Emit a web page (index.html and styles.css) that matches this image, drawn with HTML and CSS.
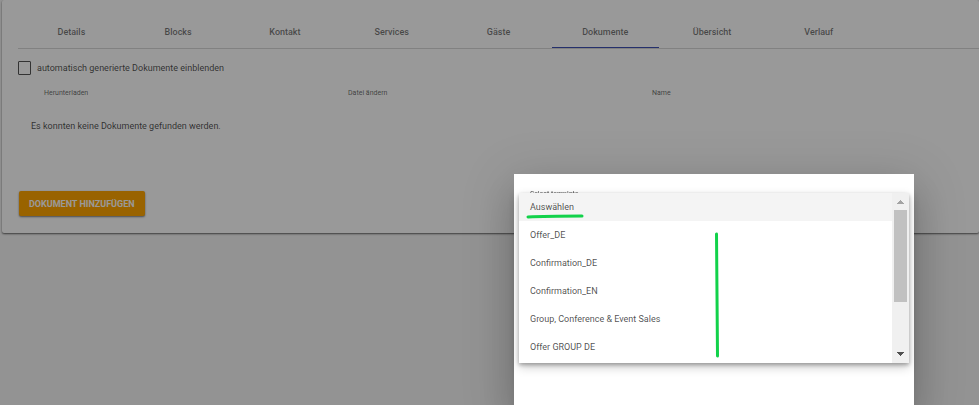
FILE: index.html
```html
<!DOCTYPE html>
<html lang="de">
<head>
    <meta charset="UTF-8">
    <meta name="viewport" content="width=device-width, initial-scale=1.0">
    <title>Dokumente</title>
    <link rel="stylesheet" href="styles.css">
</head>
<body>
    <main class="card">
        <nav class="tabs">
            <a href="#details" class="tab">Details</a>
            <a href="#blocks" class="tab">Blocks</a>
            <a href="#kontakt" class="tab">Kontakt</a>
            <a href="#services" class="tab">Services</a>
            <a href="#gaeste" class="tab">Gäste</a>
            <a href="#dokumente" class="tab active">Dokumente</a>
            <a href="#uebersicht" class="tab">Übersicht</a>
            <a href="#verlauf" class="tab">Verlauf</a>
        </nav>
        <div class="filter">
            <input type="checkbox" id="showGenerated">
            <label for="showGenerated">automatisch generierte Dokumente einblenden</label>
        </div>
        <table class="documents">
            <thead>
                <tr>
                    <th>Herunterladen</th>
                    <th>Datei ändern</th>
                    <th>Name</th>
                </tr>
            </thead>
            <tbody>
                <tr>
                    <td colspan="3">Es konnten keine Dokumente gefunden werden.</td>
                </tr>
            </tbody>
        </table>
        <button class="add-button" type="button">DOKUMENT HINZUFÜGEN</button>
    </main>

    <div class="backdrop"></div>

    <div class="dialog" role="dialog" aria-modal="true">
        <label class="field-label" for="template">Select template</label>
        <select id="template" class="template-select">
            <option>Auswählen</option>
        </select>

        <div class="dropdown">
            <ul class="options" role="listbox">
                <li><button type="button" class="option selected" role="option" aria-selected="true">Auswählen</button></li>
                <li><button type="button" class="option" role="option">Offer_DE</button></li>
                <li><button type="button" class="option" role="option">Confirmation_DE</button></li>
                <li><button type="button" class="option" role="option">Confirmation_EN</button></li>
                <li><button type="button" class="option" role="option">Group, Conference &amp; Event Sales</button></li>
                <li><button type="button" class="option" role="option">Offer GROUP DE</button></li>
            </ul>
            <div class="scrollbar">
                <svg class="arrow up" viewBox="0 0 7 4"><path d="M3 0h1v1h1v1h1v1h1v1H0V3h1V2h1V1h1z"/></svg>
                <div class="thumb"></div>
                <svg class="arrow down" viewBox="0 0 7 4"><path d="M0 0h7v1H6v1H5v1H4v1H3V3H2V2H1V1H0z"/></svg>
            </div>
            <svg class="marks" viewBox="0 0 390 170">
                <path d="M9 24Q26 23 63 23" />
                <path d="M197.500 41L198.500 163" />
            </svg>
        </div>
    </div>
</body>
</html>
```
FILE: styles.css
```css
* {
    margin: 0;
    padding: 0;
    box-sizing: border-box;
}

body {
    font-family: Roboto, Arial, sans-serif;
    font-size: 9px;
    line-height: 12px;
    color: rgba(0, 0, 0, 0.7);
    background-color: #f5f5f5;
    min-height: 100vh;
    overflow: hidden;
}

.card {
    margin-left: 2px;
    padding: 16px 0 17px 16px;
    background-color: white;
    border-radius: 2px;
    box-shadow: 0 1px 2px rgba(0, 0, 0, 0.6);
}

.tabs {
    display: grid;
    grid-template-columns: repeat(9, 1fr);
    border-bottom: 1px solid #d8d8d8;
}

.tab {
    display: flex;
    justify-content: center;
    align-items: center;
    height: 32px;
    border-bottom: 1px solid transparent;
    font-weight: 500;
    color: rgba(0, 0, 0, 0.54);
    text-decoration: none;
}

.tab.active {
    border-bottom-color: #3f51b5;
}

.filter {
    display: flex;
    align-items: center;
    gap: 6px;
    padding: 12px 0;
}

.filter input {
    appearance: none;
    width: 13px;
    height: 14px;
    border: 1px solid #555;
    border-radius: 1px;
}

.documents {
    width: 100%;
    table-layout: fixed;
    border-collapse: collapse;
}

.documents th {
    width: 304px;
    padding-left: 26px;
    font-size: 7px;
    font-weight: 400;
    text-align: left;
    color: rgba(0, 0, 0, 0.6);
}

.documents th:last-child {
    width: auto;
}

.documents td {
    padding: 21px 13px;
}

.add-button {
    display: block;
    margin: 38px 0 0 1px;
    padding: 0 10px;
    height: 25px;
    font: 700 9px Roboto, Arial, sans-serif;
    color: white;
    background-color: #ffa500;
    border: none;
    border-radius: 2px;
    box-shadow: 0 1px 2px rgba(0, 0, 0, 0.5);
    cursor: pointer;
}

.backdrop {
    position: fixed;
    inset: 0;
    background-color: rgba(0, 0, 0, 0.4);
}

.dialog {
    position: absolute;
    top: 174px;
    bottom: 0;
    left: 514px;
    width: 400px;
    padding: 14px 16px;
    background-color: white;
    box-shadow: 0 11px 15px -7px rgba(0, 0, 0, 0.2), 0 24px 38px 3px rgba(0, 0, 0, 0.14), 0 9px 46px 8px rgba(0, 0, 0, 0.12);
}

.field-label {
    display: block;
    font-size: 7px;
}

.template-select {
    width: 100%;
    border: none;
    font: 9px Roboto, Arial, sans-serif;
}

.dropdown {
    position: absolute;
    top: 19px;
    left: 5px;
    right: 5px;
    display: flex;
    background-color: white;
    box-shadow: 0 2px 4px rgba(0, 0, 0, 0.3), 0 4px 10px rgba(0, 0, 0, 0.2);
}

.options {
    flex: 1;
    padding-bottom: 2px;
    list-style: none;
}

.option {
    display: block;
    width: 100%;
    height: 28px;
    padding: 0 11px;
    font: 9px Roboto, Arial, sans-serif;
    text-align: left;
    color: rgba(0, 0, 0, 0.7);
    background-color: white;
    border: none;
    cursor: pointer;
}

.option.selected {
    background-color: #f4f4f4;
}

.scrollbar {
    display: flex;
    flex-direction: column;
    align-items: center;
    width: 17px;
    padding: 7px 2px;
    background-color: #f0f0f0;
}

.arrow {
    width: 7px;
    height: 4px;
    fill: #a3a3a3;
}

.arrow.down {
    margin-top: auto;
    fill: #505050;
}

.thumb {
    width: 100%;
    height: 92px;
    margin-top: 6px;
    background-color: #c1c1c1;
}

.marks {
    position: absolute;
    top: 0;
    left: 0;
    width: 100%;
    height: 100%;
    fill: none;
    stroke: #12d24a;
    stroke-width: 3;
    stroke-linecap: round;
    pointer-events: none;
}
```
